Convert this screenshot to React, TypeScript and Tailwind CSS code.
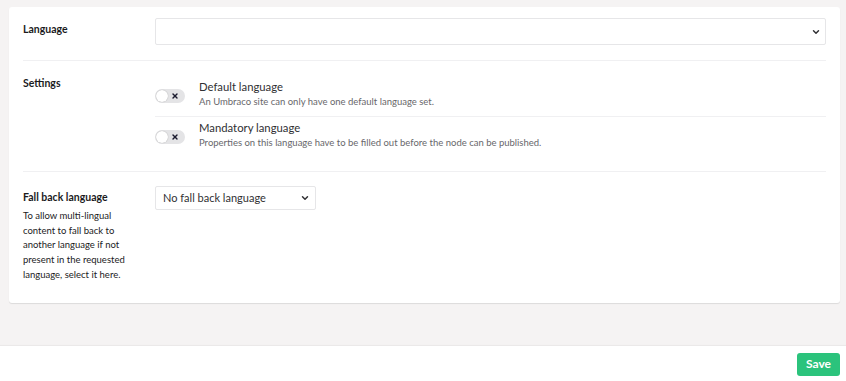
import { ChevronDown, X } from "lucide-react";

function Toggle() {
  return (
    <div className="relative mt-[9px] h-[14px] w-[30px] shrink-0 rounded-full bg-[#e4e4e6]">
      <div className="absolute left-[1px] top-[1px] h-[12px] w-[12px] rounded-full bg-white shadow-[0_0_1px_rgba(0,0,0,0.35)]" />
      <X size={8} strokeWidth={4} className="absolute right-[6px] top-[3px] text-[#1b1b2f]" />
    </div>
  );
}

function Divider() {
  return <div className="h-px bg-[#f0f0f2]" />;
}

export default function App() {
  return (
    <div
      className="flex h-[381px] w-[846px] flex-col bg-[#f5f3f3] text-[#1b1b1d]"
      style={{ fontFamily: "Lato, 'Open Sans', sans-serif" }}
    >
      <div className="flex-1 pl-[9px] pr-[6px] pt-[7px]">
        <div className="h-[296px] rounded-[3px] bg-white px-[14px] shadow-[0_1px_1px_rgba(0,0,0,0.1)]">
          <div className="flex pt-[11px] pb-[15px]">
            <div className="w-[132px] pt-[4px] text-[10.5px] font-bold leading-[14px]">Language</div>
            <div className="flex h-[27px] flex-1 items-center justify-end rounded-[2px] border border-[#e6e6e8] pr-[4px]">
              <ChevronDown size={10} strokeWidth={3.5} className="text-[#303033]" />
            </div>
          </div>
          <Divider />
          <div className="flex pt-[15px]">
            <div className="w-[132px] text-[10.5px] font-bold leading-[14px]">Settings</div>
            <div className="flex-1">
              <div className="flex gap-[14px] pt-[4px] pb-[7px]">
                <Toggle />
                <div>
                  <div className="text-[11.3px] leading-[14px] text-[#303033]">Default language</div>
                  <div className="mt-px text-[9.5px] leading-[14px] text-[#68676b]">
                    An Umbraco site can only have one default language set.
                  </div>
                </div>
              </div>
              <Divider />
              <div className="flex gap-[14px] pt-[4px] pb-[21px]">
                <Toggle />
                <div>
                  <div className="text-[11.3px] leading-[14px] text-[#303033]">Mandatory language</div>
                  <div className="mt-px text-[9.5px] leading-[14px] text-[#68676b]">
                    Properties on this language have to be filled out before the node can be published.
                  </div>
                </div>
              </div>
            </div>
          </div>
          <Divider />
          <div className="flex pt-[14px]">
            <div className="w-[132px] pr-[12px]">
              <div className="pt-[4px] text-[10.5px] font-bold leading-[14px]">Fall back language</div>
              <div className="mt-[5px] text-[9.5px] leading-[14.7px] text-[#1b1b1d]">
                To allow multi-lingual content to fall back to another language if not present in the requested
                language, select it here.
              </div>
            </div>
            <div>
              <div className="flex h-[24px] w-[161px] items-center justify-between rounded-[2px] border border-[#e6e6e8] pl-[7px] pr-[5px] text-[11px] text-[#303033]">
                <span>No fall back language</span>
                <ChevronDown size={10} strokeWidth={3.5} className="text-[#303033]" />
              </div>
            </div>
          </div>
        </div>
      </div>
      <div className="flex h-[35px] items-center justify-end bg-white pr-[6px] pt-[1px] shadow-[0_-1px_1px_rgba(0,0,0,0.04)]">
        <button className="h-[23px] w-[43px] rounded-[3px] bg-[#2bc37c] text-[12px] font-bold text-white">
          Save
        </button>
      </div>
    </div>
  );
}
